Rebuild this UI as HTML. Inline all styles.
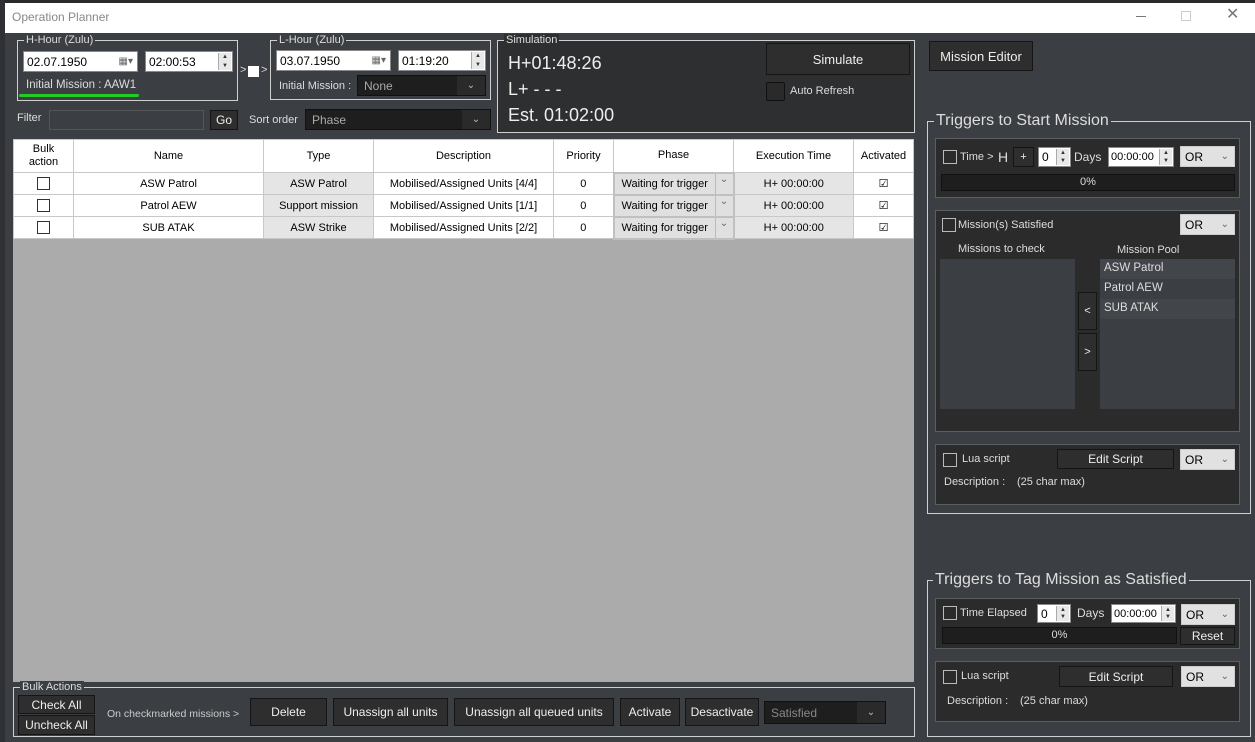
<!DOCTYPE html>
<html><head><meta charset="utf-8">
<style>
*{box-sizing:border-box;margin:0;padding:0}
body{width:1255px;height:742px;background:#3b3e42;font-family:"Liberation Sans",Arial,sans-serif;font-size:11px;color:#e6e6e6;position:relative;overflow:hidden}
.a{position:absolute}
.t{position:absolute;white-space:nowrap;line-height:1}
.grp{position:absolute;border:1px solid #d0d0d0}
.gl{position:absolute;top:-7px;left:6px;background:#3b3e42;padding:0 2px;white-space:nowrap;line-height:13px;color:#ddd}
.box{position:absolute;background:#2b2b2b;border:1px solid #5c5f62}
.btn{position:absolute;background:#2e2e2e;border:1px solid #151515;color:#eee;display:flex;align-items:center;justify-content:center;white-space:nowrap}
.inp{position:absolute;background:#fff;border:1px solid #888;color:#000;padding-left:3px;display:flex;align-items:center;white-space:nowrap;overflow:hidden}
.dcombo{position:absolute;background:#1e1e1e;border:1px solid #111;color:#aaa;padding-left:6px;display:flex;align-items:center}
.lcombo{position:absolute;background:#e1e1e1;border:1px solid #ccc;color:#000;padding-left:4px;display:flex;align-items:center}
.chk{position:absolute;width:14px;height:14px;border:1px solid #bbb;background:transparent}
.spin{position:absolute;right:1px;top:1px;bottom:1px;width:13px;background:#e8e8e8;border-left:1px solid #aaa;font-size:6px;color:#333;display:flex;flex-direction:column;align-items:center;justify-content:space-around}
table{border-collapse:collapse;position:absolute;left:13px;top:139px;width:901px;color:#000;font-size:11px;table-layout:fixed}
td,th{border:1px solid #c8c8c8;text-align:center;font-weight:normal;height:22px;background:#fff;white-space:nowrap;overflow:hidden}
th{height:33px;line-height:13px}
.g{background:#e5e5e5}
.ph{background:#e0e0e0;text-align:left;padding-left:7px;position:relative;border:2px solid #c0c0c0}
.cb{display:inline-block;width:13px;height:13px;border:1px solid #333;vertical-align:middle}
</style></head><body>
<div class="a" style="left:0;top:0;width:1255px;height:3px;background:#2a2a2a"></div>
<div class="a" style="left:0;top:0;width:5px;height:742px;background:#2e3034"></div>
<div class="a" style="left:5px;top:3px;width:1250px;height:30px;background:#fff"></div>
<div class="t" style="left:12px;top:11px;color:#888;font-size:12px">Operation Planner</div>
<div class="a" style="left:1136px;top:16px;width:10px;height:1px;background:#777"></div>
<div class="a" style="left:1181px;top:11px;width:10px;height:10px;border:1px solid #ccc"></div>
<div class="t" style="left:1226px;top:7px;color:#777;font-size:16px">✕</div>

<div class="grp" style="left:17px;top:40px;width:221px;height:61px"><div class="gl">H-Hour (Zulu)</div></div>
<div class="inp" style="left:23px;top:51px;width:115px;height:21px;font-size:12px">02.07.1950<span style="position:absolute;right:4px;color:#666;font-size:10px">▦▾</span></div>
<div class="inp" style="left:145px;top:51px;width:88px;height:21px;font-size:12px">02:00:53<div class="spin"><span>▲</span><span>▼</span></div></div>
<div class="t" style="left:26px;top:80px;color:#ddd;font-size:11.5px">Initial Mission : AAW1</div>
<div class="a" style="left:19px;top:94px;width:120px;height:3px;background:#22cc22;border-radius:2px"></div>
<div class="t" style="left:240px;top:65px;color:#ddd">&gt;</div>
<div class="a" style="left:248px;top:66px;width:11px;height:11px;background:#fff"></div>
<div class="t" style="left:261px;top:65px;color:#ddd">&gt;</div>

<div class="grp" style="left:270px;top:40px;width:221px;height:60px"><div class="gl">L-Hour (Zulu)</div></div>
<div class="inp" style="left:276px;top:50px;width:115px;height:21px;font-size:12px">03.07.1950<span style="position:absolute;right:4px;color:#666;font-size:10px">▦▾</span></div>
<div class="inp" style="left:398px;top:50px;width:88px;height:21px;font-size:12px">01:19:20<div class="spin"><span>▲</span><span>▼</span></div></div>
<div class="t" style="left:279px;top:81px;color:#ddd">Initial Mission :</div>
<div class="dcombo" style="left:357px;top:75px;width:129px;height:21px;font-size:12px">None<span style="position:absolute;right:0;top:0;width:28px;height:19px;background:#2a2a2a;color:#bbb;text-align:center;line-height:19px;font-size:10px">⌄</span></div>

<div class="t" style="left:17px;top:113px;color:#ddd">Filter</div>
<div class="a" style="left:49px;top:110px;width:155px;height:20px;background:#3b3e42;border:1px solid #555"></div>
<div class="btn" style="left:210px;top:110px;width:28px;height:20px;font-size:12px">Go</div>
<div class="t" style="left:249px;top:115px;color:#ddd">Sort order</div>
<div class="dcombo" style="left:305px;top:109px;width:186px;height:21px;font-size:12px">Phase<span style="position:absolute;right:0;top:0;width:28px;height:19px;background:#2a2a2a;color:#bbb;text-align:center;line-height:19px;font-size:10px">⌄</span></div>

<div class="grp" style="left:497px;top:40px;width:418px;height:93px;background:#2d2f31"><div class="gl" style="background:#2d2f31">Simulation</div></div>
<div class="t" style="left:508px;top:54px;font-size:18px;color:#eee">H+01:48:26</div>
<div class="t" style="left:508px;top:80px;font-size:18px;color:#eee">L+ - - -</div>
<div class="t" style="left:508px;top:106px;font-size:18px;color:#eee">Est. 01:02:00</div>
<div class="btn" style="left:766px;top:43px;width:144px;height:32px;font-size:13px">Simulate</div>
<div class="a" style="left:766px;top:82px;width:19px;height:19px;background:#2a2a2a;border:1px solid #111;border-radius:2px"></div>
<div class="t" style="left:790px;top:86px;color:#ddd">Auto Refresh</div>

<div class="btn" style="left:929px;top:41px;width:104px;height:30px;font-size:13px">Mission Editor</div>

<div class="a" style="left:13px;top:139px;width:901px;height:543px;background:#ababab"></div>
<table>
<colgroup><col style="width:60px"><col style="width:190px"><col style="width:110px"><col style="width:180px"><col style="width:60px"><col style="width:120px"><col style="width:120px"><col></colgroup>
<tr><th>Bulk<br>action</th><th>Name</th><th>Type</th><th>Description</th><th>Priority</th><th>Phase</th><th>Execution Time</th><th>Activated</th></tr>
<tr><td><span class="cb"></span></td><td>ASW Patrol</td><td class="g">ASW Patrol</td><td>Mobilised/Assigned Units [4/4]</td><td>0</td><td class="ph">Waiting for trigger<span style="position:absolute;right:0;top:0;width:18px;height:100%;border-left:1px solid #bbb;color:#666;text-align:center;font-size:10px;background:#e0e0e0">⌄</span></td><td class="g">H+ 00:00:00</td><td>☑</td></tr>
<tr><td><span class="cb"></span></td><td>Patrol AEW</td><td class="g">Support mission</td><td>Mobilised/Assigned Units [1/1]</td><td>0</td><td class="ph">Waiting for trigger<span style="position:absolute;right:0;top:0;width:18px;height:100%;border-left:1px solid #bbb;color:#666;text-align:center;font-size:10px;background:#e0e0e0">⌄</span></td><td class="g">H+ 00:00:00</td><td>☑</td></tr>
<tr><td><span class="cb"></span></td><td>SUB ATAK</td><td class="g">ASW Strike</td><td>Mobilised/Assigned Units [2/2]</td><td>0</td><td class="ph">Waiting for trigger<span style="position:absolute;right:0;top:0;width:18px;height:100%;border-left:1px solid #bbb;color:#666;text-align:center;font-size:10px;background:#e0e0e0">⌄</span></td><td class="g">H+ 00:00:00</td><td>☑</td></tr>
</table>

<div class="grp" style="left:13px;top:687px;width:902px;height:50px"><div class="gl">Bulk Actions</div></div>
<div class="btn" style="left:18px;top:695px;width:77px;height:19px;font-size:12px">Check All</div>
<div class="btn" style="left:18px;top:715px;width:77px;height:20px;font-size:12px">Uncheck All</div>
<div class="t" style="left:107px;top:709px;color:#ccc;font-size:10.5px">On checkmarked missions &gt;</div>
<div class="btn" style="left:250px;top:698px;width:77px;height:28px;font-size:12px">Delete</div>
<div class="btn" style="left:333px;top:698px;width:115px;height:28px;font-size:12px">Unassign all units</div>
<div class="btn" style="left:454px;top:698px;width:160px;height:28px;font-size:12px">Unassign all queued units</div>
<div class="btn" style="left:620px;top:698px;width:60px;height:28px;font-size:12px">Activate</div>
<div class="btn" style="left:685px;top:698px;width:74px;height:28px;font-size:12px">Desactivate</div>
<div class="dcombo" style="left:764px;top:701px;width:122px;height:23px;color:#888;font-size:12px">Satisfied<span style="position:absolute;right:0;top:0;width:28px;height:21px;background:#2a2a2a;color:#bbb;text-align:center;line-height:21px;font-size:10px">⌄</span></div>

<div class="grp" style="left:927px;top:121px;width:324px;height:393px"><div class="gl" style="font-size:16px;top:-10px;line-height:18px">Triggers to Start Mission</div></div>
<div class="box" style="left:935px;top:138px;width:305px;height:60px"></div>
<div class="chk" style="left:943px;top:150px"></div>
<div class="t" style="left:960px;top:152px;color:#ddd">Time &gt;</div>
<div class="t" style="left:998px;top:150px;color:#ddd;font-size:14px">H</div>
<div class="btn" style="left:1013px;top:147px;width:21px;height:20px">+</div>
<div class="inp" style="left:1038px;top:147px;width:33px;height:20px;font-size:12px">0<div class="spin"><span>▲</span><span>▼</span></div></div>
<div class="t" style="left:1074px;top:151px;color:#ddd;font-size:12px">Days</div>
<div class="inp" style="left:1108px;top:147px;width:66px;height:20px;font-size:11px;padding-left:2px">00:00:00<div class="spin"><span>▲</span><span>▼</span></div></div>
<div class="lcombo" style="left:1180px;top:146px;width:55px;height:21px;font-size:12px">OR<span style="position:absolute;right:5px;color:#666;font-size:10px">⌄</span></div>
<div class="a" style="left:941px;top:174px;width:294px;height:17px;background:#1e1e1e;border:1px solid #111;text-align:center;line-height:15px;color:#ddd">0%</div>

<div class="box" style="left:935px;top:210px;width:305px;height:222px"></div>
<div class="chk" style="left:942px;top:218px"></div>
<div class="t" style="left:958px;top:220px;color:#ddd">Mission(s) Satisfied</div>
<div class="lcombo" style="left:1180px;top:214px;width:55px;height:21px;font-size:12px">OR<span style="position:absolute;right:5px;color:#666;font-size:10px">⌄</span></div>
<div class="t" style="left:958px;top:244px;color:#ddd">Missions to check</div>
<div class="t" style="left:1117px;top:245px;color:#ddd">Mission Pool</div>
<div class="a" style="left:940px;top:259px;width:135px;height:150px;background:#3b3e42"></div>
<div class="a" style="left:1100px;top:259px;width:135px;height:150px;background:#3b3e42"></div>
<div class="a" style="left:1100px;top:259px;width:135px;height:20px;background:#42464a"></div>
<div class="a" style="left:1100px;top:299px;width:135px;height:20px;background:#42464a"></div>
<div class="t" style="left:1104px;top:263px;color:#ddd;font-size:11.5px">ASW Patrol</div>
<div class="t" style="left:1104px;top:283px;color:#ddd;font-size:11.5px">Patrol AEW</div>
<div class="t" style="left:1104px;top:303px;color:#ddd;font-size:11.5px">SUB ATAK</div>
<div class="btn" style="left:1078px;top:292px;width:19px;height:38px">&lt;</div>
<div class="btn" style="left:1078px;top:333px;width:19px;height:38px">&gt;</div>

<div class="box" style="left:935px;top:444px;width:305px;height:61px"></div>
<div class="chk" style="left:943px;top:453px"></div>
<div class="t" style="left:962px;top:454px;color:#ddd">Lua script</div>
<div class="btn" style="left:1057px;top:449px;width:117px;height:20px;font-size:12px">Edit Script</div>
<div class="lcombo" style="left:1180px;top:449px;width:55px;height:21px;font-size:12px">OR<span style="position:absolute;right:5px;color:#666;font-size:10px">⌄</span></div>
<div class="t" style="left:944px;top:477px;color:#ddd">Description :</div>
<div class="t" style="left:1017px;top:477px;color:#ddd">(25 char max)</div>

<div class="grp" style="left:927px;top:580px;width:324px;height:157px"><div class="gl" style="font-size:16px;top:-10px;line-height:18px;left:5px">Triggers to Tag Mission as Satisfied</div></div>
<div class="box" style="left:935px;top:598px;width:305px;height:51px"></div>
<div class="chk" style="left:943px;top:606px"></div>
<div class="t" style="left:960px;top:608px;color:#ddd">Time Elapsed</div>
<div class="inp" style="left:1037px;top:604px;width:34px;height:19px;font-size:12px">0<div class="spin"><span>▲</span><span>▼</span></div></div>
<div class="t" style="left:1077px;top:607px;color:#ddd;font-size:12px">Days</div>
<div class="inp" style="left:1111px;top:604px;width:65px;height:19px;font-size:11px;padding-left:2px">00:00:00<div class="spin"><span>▲</span><span>▼</span></div></div>
<div class="lcombo" style="left:1181px;top:604px;width:54px;height:21px;font-size:12px">OR<span style="position:absolute;right:5px;color:#666;font-size:10px">⌄</span></div>
<div class="a" style="left:942px;top:627px;width:235px;height:17px;background:#1e1e1e;border:1px solid #111;text-align:center;line-height:15px;color:#ddd">0%</div>
<div class="btn" style="left:1180px;top:627px;width:55px;height:18px;font-size:12px">Reset</div>

<div class="box" style="left:935px;top:661px;width:305px;height:61px"></div>
<div class="chk" style="left:943px;top:670px"></div>
<div class="t" style="left:961px;top:671px;color:#ddd">Lua script</div>
<div class="btn" style="left:1059px;top:666px;width:114px;height:21px;font-size:12px">Edit Script</div>
<div class="lcombo" style="left:1181px;top:666px;width:54px;height:21px;font-size:12px">OR<span style="position:absolute;right:5px;color:#666;font-size:10px">⌄</span></div>
<div class="t" style="left:947px;top:696px;color:#ddd">Description :</div>
<div class="t" style="left:1020px;top:696px;color:#ddd">(25 char max)</div>
</body></html>
